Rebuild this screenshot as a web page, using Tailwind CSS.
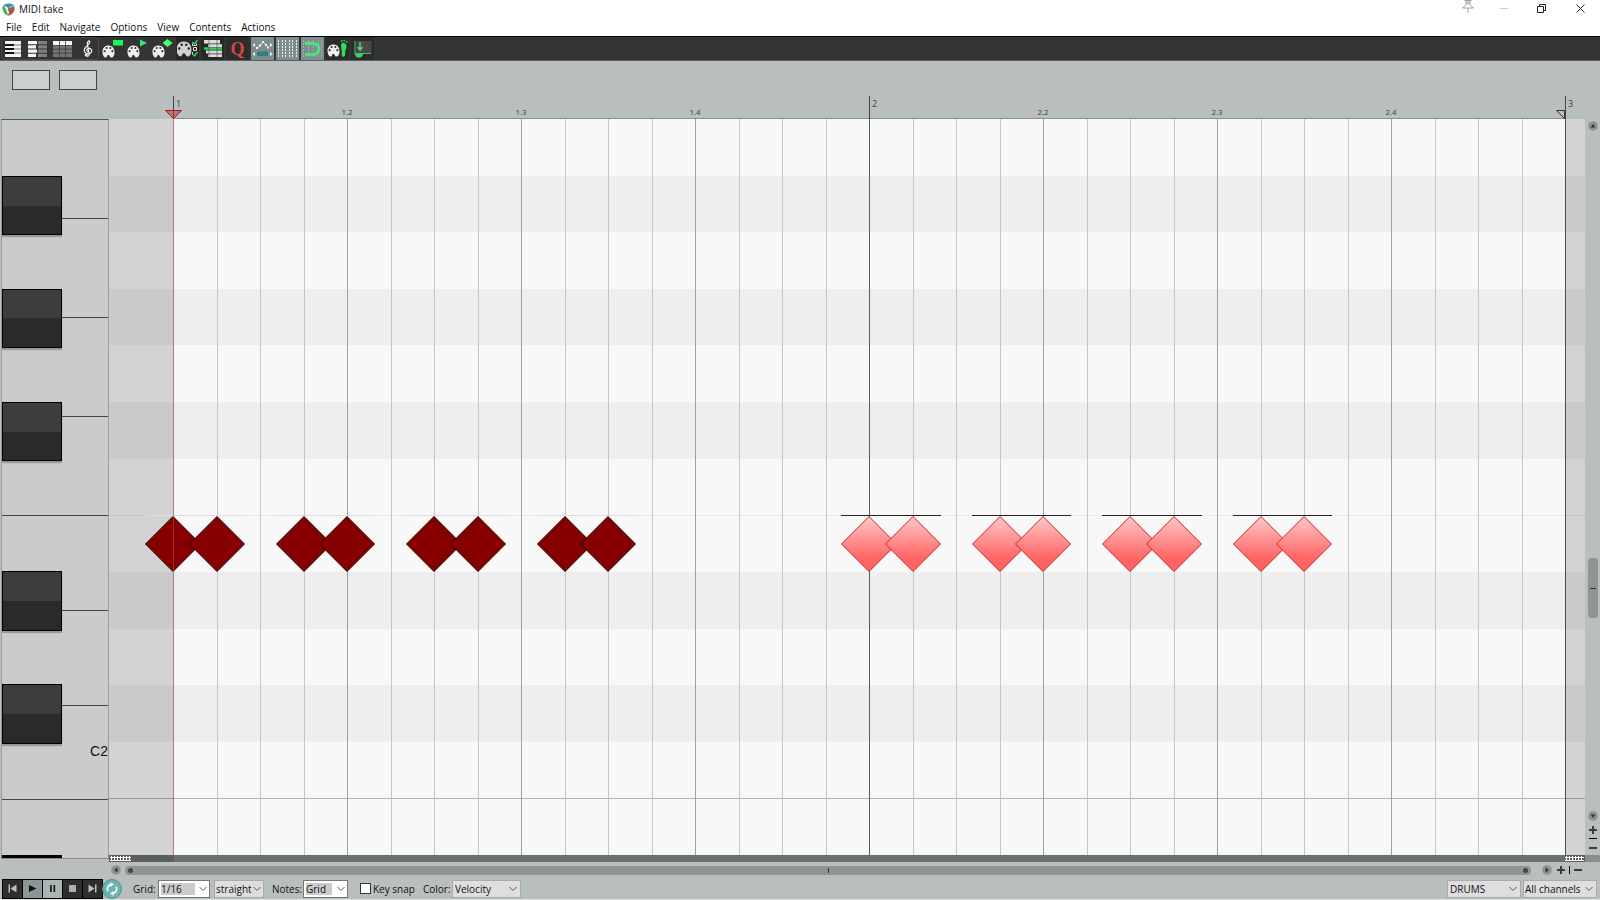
<!DOCTYPE html>
<html lang="en">
<head>
    <meta charset="UTF-8">
    <meta name="viewport" content="width=device-width, initial-scale=1.0">
    <title>MIDI take</title>
    <script src="https://cdn.jsdelivr.net/npm/@tailwindcss/browser@4"></script>
</head>
<body class="h-screen flex flex-col overflow-hidden bg-[#b8bfbe] text-[#111] text-[10px] leading-4 font-['Open_Sans','Noto_Sans',sans-serif]">
    <!-- Shared icon shapes -->
    <svg class="absolute size-0">
        <symbol id="palette" viewBox="0 0 14 14">
            <path fill-rule="evenodd" fill="#eee" d="M7 0.5C3 0.5 0.5 3.4 0.5 7c0 3.400 1.500 6.500 3.500 6.500 1.800 0 1-2.700 2.800-2.700 2 0 1.200 2.700 3.400 2.700 2 0 3.300-2.500 3.300-5.500C13.500 3.500 11 0.500 7 0.500zM5 2.200a1.100 1.100 0 1 1 0 2.200a1.100 1.100 0 0 1 0-2.200zM9 2.200a1.100 1.100 0 1 1 0 2.200a1.100 1.100 0 0 1 0-2.200zM2.800 5.500a1.100 1.100 0 1 1 0 2.200a1.100 1.100 0 0 1 0-2.200zM11.200 5.500a1.100 1.100 0 1 1 0 2.200a1.100 1.100 0 0 1 0-2.200z"/>
        </symbol>
        <symbol id="chevron" viewBox="0 0 8 8">
            <path d="M0.500 2L4 5.500L7.500 2" fill="none" stroke="#555" stroke-width="1"/>
        </symbol>
        <symbol id="diamond" viewBox="0 0 56 56">
            <path d="M28 0.500L55.500 28L28 55.500L0.500 28z"/>
        </symbol>
        <linearGradient id="pink" x1="0" y1="0" x2="0" y2="1">
            <stop offset="0" stop-color="#ffc8c8"/>
            <stop offset="0.750" stop-color="#ff6666"/>
            <stop offset="1" stop-color="#ff6060"/>
        </linearGradient>
    </svg>

    <!-- Title bar -->
    <header class="h-[18px] shrink-0 bg-white flex items-center pl-[2px] gap-1">
        <svg class="size-[13px]" viewBox="0 0 13 13">
            <path d="M0.500 4.500C1 2 3.500 0.500 6.500 0.500c3.500 0 6 1.500 6 4L9.500 3.200 6.500 5.200 3 3z" fill="#2a9bb8"/>
            <path d="M0.400 4C0.200 8 2.500 11.800 6.300 12.700L6.200 8.500 2.500 3.500z" fill="#43b649"/>
            <path d="M12.700 4.200c0.200 4-2.300 7.500-6.400 8.600L5.500 5.800 9.500 4z" fill="#b0524a"/>
            <path d="M2.800 3.600L5.500 5L7.200 10L6 11.500z" fill="#e9efef"/>
        </svg>
        <h1>MIDI take</h1>
        <div class="ml-auto flex items-start h-full">
            <button aria-label="Pin" class="w-[36px] flex justify-center">
                <svg class="w-3 h-[13px]" viewBox="0 0 12 13" fill="none" stroke="#888" stroke-width="0.800">
                    <path d="M2.500 0.500h7M4 1v3.500L0.700 8h10.600L8 4.500V1M5.200 1.500v3M6.800 1.500v3M6 8v5"/>
                </svg>
            </button>
            <button aria-label="Minimize" class="w-[36px] h-4 flex justify-center items-center">
                <span class="w-2 h-px bg-[#ccc]"></span>
            </button>
            <button aria-label="Restore" class="w-[38px] h-4 flex justify-center items-center">
                <svg class="size-[9px]" viewBox="0 0 9 9" fill="none" stroke="#222"><path d="M0.500 2.500h6v6h-6zM2.500 2.500v-2h6v6h-2"/></svg>
            </button>
            <button aria-label="Close" class="w-[40px] h-4 flex justify-center items-center">
                <svg class="size-[9px]" viewBox="0 0 9 9" fill="none" stroke="#222"><path d="M0.500 0.500l8 8M8.500 0.500l-8 8"/></svg>
            </button>
        </div>
    </header>

    <!-- Menu -->
    <nav class="h-[18px] shrink-0 bg-white flex items-center gap-[10px] pl-[6px]">
        <button>File</button>
        <button>Edit</button>
        <button>Navigate</button>
        <button>Options</button>
        <button>View</button>
        <button>Contents</button>
        <button>Actions</button>
    </nav>

    <!-- Toolbar -->
    <div class="h-[25px] shrink-0 bg-[#343434] border-t border-black border-b border-b-[#5c5f5f] flex items-stretch pl-px gap-[2px]">
        <div class="flex gap-[2px] rounded-[4px] outline -outline-offset-1 outline-[#4a4a4a]">
            <button aria-label="Piano roll" class="w-[23px] flex items-center justify-center">
                <svg class="w-4 h-4" viewBox="0 0 16 16"><path d="M0 0h16v16H0z" fill="#f4f4f4"/><path d="M0 3h9v2H0zM0 7h9v2H0zM0 11h9v2H0z" fill="#111"/><path d="M9 4h7M9 8h7M9 12h7" stroke="#555" stroke-width=".8"/></svg>
            </button>
            <button aria-label="Named notes" class="w-[23px] flex items-center justify-center">
                <svg class="w-[19px] h-4" viewBox="0 0 19 16"><path d="M0 0h9v3.200H0zM0 4.200h8v3.200H0zM0 8.500h9v3.200H0zM0 12.800h8V16H0z" fill="#f4f4f4"/><path d="M10 0h9v3.200h-9zM10 4.200h9v3.200h-9zM10 8.500h9v3.200h-9zM10 12.800h9V16h-9z" fill="#808080"/></svg>
            </button>
            <button aria-label="Event list" class="w-[23px] flex items-center justify-center">
                <svg class="w-[19px] h-4" viewBox="0 0 19 16"><path d="M0 0h6v4H0zM6.700 0h5.600v4H6.700zM13 0h6v4h-6z" fill="#f4f4f4"/><path d="M0 4.600h6v3.200H0zM6.700 4.600h5.600v3.200H6.700zM13 4.600h6v3.200h-6zM0 8.500h6v3.200H0zM6.700 8.500h5.600v3.200H6.700zM13 8.500h6v3.200h-6zM0 12.500h6V16H0zM6.700 12.500h5.600V16H6.700zM13 12.500h6V16h-6z" fill="#747474"/></svg>
            </button>
            <button aria-label="Notation" class="w-[23px] flex items-center justify-center">
                <svg class="w-[10px] h-[17px]" viewBox="0 0 10 17" fill="none" stroke="#eee" stroke-width="1.200"><path d="M5.800 11.500C3.500 11.800 3.200 9.200 5 8.600c2.500-0.700 4.300 1.400 3.500 3.300-1 2.200-5 2.400-6.600 0.300C0 9.500 2.200 7.400 4.200 5.800 6.300 4 7.200 2.600 6.500 1 5.500 0.500 4.200 2.200 4.400 4l1.800 10c0.200 2-1.500 2.800-2.900 1.800"/><circle cx="3.200" cy="14.800" r="1" fill="#eee"/></svg>
            </button>
        </div>
        <button aria-label="Rectangle notes" class="w-[23px] flex items-center justify-center">
            <svg class="w-[21px] h-5" viewBox="0 0 21 20"><use href="#palette" x="0" y="6" width="13" height="13"/><path d="M11 1h10v5.500H11z" fill="#19f556"/></svg>
        </button>
        <button aria-label="Triangle notes" class="w-[23px] flex items-center justify-center">
            <svg class="w-[21px] h-5" viewBox="0 0 21 20"><use href="#palette" x="0" y="6" width="13" height="13"/><path d="M13 0.500L20 4L13 7.500z" fill="#35e866"/></svg>
        </button>
        <button aria-label="Diamond notes" class="w-[23px] flex items-center justify-center">
            <svg class="w-[21px] h-5" viewBox="0 0 21 20"><use href="#palette" x="0" y="6" width="13" height="13"/><path d="M15.500 0L20.500 4L15.500 8L10.500 4z" fill="#45ff70"/></svg>
        </button>
        <button aria-label="Note options" class="w-[23px] flex items-center justify-center bg-[#282828]">
            <svg class="w-[21px] h-[18px]" viewBox="0 0 21 18"><use href="#palette" x="-1" y="1" width="16" height="16" opacity=".85"/><path d="M15.500 2l2 2 3-4M15.500 14l2 2 3-4" fill="none" stroke="#2ee05a" stroke-width="1.300"/><path d="M16.500 7.500h3v3h-3zM15.500 3.500v2h4v-2M15.500 12v2" fill="none" stroke="#ddd"/></svg>
        </button>
        <button aria-label="Media item lane" class="w-[23px] flex items-center justify-center bg-[#282828]">
            <svg class="w-[18px] h-[17px]" viewBox="0 0 18 17"><path d="M0 0h16v3.500H0zM4 4.200h14V7H4zM2 10.500h16v3H2zM4 14.200h14V17H4z" fill="#ddd"/><path d="M0 7.300h18v2.500H0z" fill="#2fd158"/><path d="M5 0v17M13 0v17" stroke="#444" stroke-width=".6"/></svg>
        </button>
        <button aria-label="Quantize" class="w-[23px] flex items-center justify-center bg-[#2c2c2c] text-[#d84848] text-[18px] font-bold font-['Liberation_Serif',serif]">Q</button>
        <button aria-label="CC envelope" class="w-[23px] flex items-center justify-center bg-[#7e8e90]">
            <svg class="w-[21px] h-[18px]" viewBox="0 0 21 18"><path d="M5 8L8 6L11 2L14 5L16 7" fill="none" stroke="#e8eeee"/><path d="M4 7h2v2H4zM7 4.500h2v2H7zM10 1h2v2h-2zM13 4h2v2h-2zM15 6.500h2v2h-2zM3 3L0.500 5L3 7zM18 3l2.500 2L18 7zM3 12l-2.500 2L3 16zM18 12l2.500 2-2.500 2z" fill="#f4f6f6"/><path d="M5 11.500h11v4.500H5z" fill="#2f7f80"/></svg>
        </button>
        <button aria-label="Show grid" class="w-[23px] flex items-center justify-center bg-[#7e8e90]">
            <svg class="w-[19px] h-[18px]" viewBox="0 0 19 18"><path d="M0.500 0v18M4.500 0v18M7.500 0v18M11.500 0v18M14.500 0v18M18.500 0v18" stroke="#e8eeee" stroke-dasharray="2 1"/></svg>
        </button>
        <button aria-label="Snap to grid" class="w-[23px] flex items-center justify-center bg-[#7e8e90]">
            <svg class="w-[19px] h-[18px]" viewBox="0 0 19 18"><path d="M0.500 0v18M5.500 0v18M10.500 0v18M15.500 0v18M18.500 0v18" stroke="#9fadad" stroke-dasharray="2 1"/><path d="M2 3.500h8.500a5 5 0 0 1 0 11H2" fill="none" stroke="#4be37c" stroke-width="3"/></svg>
        </button>
        <button aria-label="Step input" class="w-[23px] flex items-center justify-center bg-[#2c2c2c]">
            <svg class="w-[21px] h-[18px]" viewBox="0 0 21 18"><use href="#palette" x="0" y="4" width="13" height="13"/><path d="M14.500 3.500c1-1.500 4.500-1 5 2 0.400 3-1.200 4-1.400 6.500-0.100 2 0.400 4.500-1.600 4.800-2 0-2-2-1.700-4.300 0.400-3-1.600-6-0.300-9z" fill="#2fe058"/><path d="M14 1h1.500M16.500 0.500h1.500M19 1.800h1.500" stroke="#2fe058" stroke-width="1.500"/></svg>
        </button>
        <button aria-label="Dock editor" class="w-[23px] flex items-center justify-center bg-[#2c2c2c]">
            <svg class="w-[18px] h-[18px]" viewBox="0 0 18 18"><path d="M2.500 1h15v12h-15z" fill="#484848"/><path d="M1 1v12.500h16" fill="none" stroke="#49b868" stroke-width="1.200"/><path d="M6 2v8M3.500 7L6 10L8.500 7" fill="none" stroke="#54d67a" stroke-width="1.500"/><path d="M1 14h8c0 5-8 5-8 0z" fill="#35d561"/></svg>
        </button>
    </div>

    <!-- Track boxes + ruler -->
    <div class="h-[58px] shrink-0 flex">
        <div class="w-[109px] shrink-0 flex items-start gap-[9px] pl-3 pt-[9px]">
            <div class="w-[38px] h-5 border border-[#444] bg-[#cdcfce]"></div>
            <div class="w-[38px] h-5 border border-[#444] bg-[#cdcfce]"></div>
        </div>
        <div class="w-16 shrink-0"></div>
        <div id="ruler" class="relative flex-1 border-b border-[#8a8f8e] text-[#3c4242] text-[8px] leading-3"></div>
        <div class="w-[35px] shrink-0"></div>
    </div>

    <!-- Editor -->
    <main class="flex-1 min-h-0 flex">
        <!-- Piano keys -->
        <div class="relative ml-px w-[108px] shrink-0 border-t border-t-[#555] border-x border-x-[#999d9d] bg-[#cbcbcb]">
            <div id="white-keys" class="h-full flex flex-col"></div>
            <div id="black-keys" class="absolute inset-0 grid grid-rows-[repeat(13,minmax(0,1fr))] text-right text-[14px] leading-[18px] font-['Liberation_Sans',sans-serif]"></div>
        </div>

        <!-- Piano roll -->
        <div class="relative flex-1 flex">
            <div id="lanes" class="absolute inset-0 grid grid-rows-[repeat(13,minmax(0,1fr))]"></div>
            <div class="relative w-16 shrink-0 bg-black/15"></div>
            <div id="roll" class="relative flex-1"></div>
            <div class="relative w-5 shrink-0 bg-black/15"></div>
        </div>

        <!-- Vertical scroll -->
        <div class="w-[15px] shrink-0 flex flex-col items-center">
            <button aria-label="Scroll up" class="mt-[2px]">
                <svg class="size-[10px]" viewBox="0 0 10 10"><circle cx="5" cy="5" r="4.800" fill="#8d9392"/><path d="M5 3L7.500 6.500h-5z" fill="#333"/></svg>
            </button>
            <div class="flex-1 w-full flex flex-col items-center">
                <div class="basis-0 grow-427"></div>
                <div class="w-[10px] h-[60px] rounded-[4px] bg-[#8f9594] flex items-center justify-center"><span class="w-[6px] h-px bg-[#333]"></span></div>
                <div class="basis-0 grow-193"></div>
            </div>
            <button aria-label="Scroll down">
                <svg class="size-[10px]" viewBox="0 0 10 10"><circle cx="5" cy="5" r="4.800" fill="#8d9392"/><path d="M5 7L7.500 3.500h-5z" fill="#333"/></svg>
            </button>
            <button aria-label="Zoom in vertically" class="mt-[5px]">
                <svg class="size-2" viewBox="0 0 8 8"><path d="M4 0v8M0 4h8" stroke="#3a3d3d" stroke-width="2"/></svg>
            </button>
            <span class="mt-1 w-2 h-px bg-black"></span>
            <button aria-label="Zoom out vertically" class="mt-2 mb-[6px] w-2 h-[2px] bg-[#3a3d3d]"></button>
        </div>
    </main>

    <!-- CC lane divider -->
    <div class="h-[7px] shrink-0 flex">
        <div class="ml-px w-[108px] h-1 shrink-0 flex border-x border-b border-[#888c8c] bg-[#cbcbcb]">
            <div class="w-[60px] bg-black"></div>
        </div>
        <div class="w-16 shrink-0 bg-[#5a5e5e] p-px">
            <div class="w-[21px] h-[5px] bg-[radial-gradient(#fff_50%,transparent_60%)] bg-size-[3px_3px]"></div>
        </div>
        <div class="flex-1 bg-[#6b6f6f] border-l border-[#9c4444]"></div>
        <div class="w-5 shrink-0 bg-[#5a5e5e] py-px">
            <div class="w-[19px] h-[5px] bg-[radial-gradient(#fff_50%,transparent_60%)] bg-size-[3px_3px]"></div>
        </div>
        <div class="w-[15px] shrink-0 bg-[#8a8f8f]"></div>
    </div>

    <!-- Horizontal scroll -->
    <div class="h-4 shrink-0 flex items-center pl-[111px] pr-[18px]">
        <button aria-label="Scroll left">
            <svg class="size-[10px]" viewBox="0 0 10 10"><circle cx="5" cy="5" r="4.800" fill="#8d9392"/><path d="M3 5L6.500 2.500v5z" fill="#333"/></svg>
        </button>
        <div class="flex-1 ml-1 h-[9px] rounded-[4px] bg-[#8f9594] flex items-center justify-between px-[3px]">
            <span class="size-[5px] rounded-full bg-[#444]"></span>
            <span class="w-px h-[5px] bg-[#333]"></span>
            <span class="size-[5px] rounded-full bg-[#444]"></span>
        </div>
        <button aria-label="Scroll right" class="ml-[11px]">
            <svg class="size-[10px]" viewBox="0 0 10 10"><circle cx="5" cy="5" r="4.800" fill="#8d9392"/><path d="M7 5L3.500 2.500v5z" fill="#333"/></svg>
        </button>
        <button aria-label="Zoom in" class="ml-[5px]">
            <svg class="size-2" viewBox="0 0 8 8"><path d="M4 0v8M0 4h8" stroke="#3a3d3d" stroke-width="2"/></svg>
        </button>
        <span class="ml-1 w-px h-2 bg-black"></span>
        <button aria-label="Zoom out" class="ml-1 w-2 h-[2px] bg-[#3a3d3d]"></button>
    </div>

    <!-- Transport and settings -->
    <footer class="h-[22px] shrink-0 flex items-center pl-[2px] pr-[3px] border-b border-[#dfe3e2]">
        <div class="flex h-5 bg-black gap-px p-px">
            <button aria-label="Go to start" class="w-[19px] flex items-center justify-center bg-[#2e2e2e]"><svg class="size-[9px]" viewBox="0 0 9 9" fill="#b9c0c0"><path d="M0.500 0.500h1.500v8H0.500zM8.500 0.500v8L2.500 4.500z"/></svg></button>
            <button aria-label="Play" class="w-[19px] flex items-center justify-center bg-[#8b9797]"><svg class="size-[9px]" viewBox="0 0 9 9" fill="#111"><path d="M1 1v7l7.500-3.500z"/></svg></button>
            <button aria-label="Pause" class="w-[19px] flex items-center justify-center bg-[#abb5b4]"><svg class="size-[9px]" viewBox="0 0 9 9" fill="#222"><path d="M2 1h1.800v7H2zM5.400 1h1.800v7H5.400z"/></svg></button>
            <button aria-label="Stop" class="w-[19px] flex items-center justify-center bg-[#2e2e2e]"><span class="size-[7px] bg-[#a9b1b1]"></span></button>
            <button aria-label="Go to end" class="w-[19px] flex items-center justify-center bg-[#2e2e2e]"><svg class="size-[9px]" viewBox="0 0 9 9" fill="#b9c0c0"><path d="M7 0.500h1.500v8H7zM0.500 0.500v8l6-4z"/></svg></button>
        </div>
        <button aria-label="Repeat" class="-ml-px">
            <svg class="size-5" viewBox="0 0 20 20"><circle cx="10" cy="10" r="9.500" fill="#6db3b2" stroke="#568f8f"/><path d="M9 5.500A4.500 4.500 0 0 0 6 12.200M11 14.500A4.500 4.500 0 0 0 14 7.800" fill="none" stroke="#eefafa" stroke-width="1.800"/><path d="M8.500 3l3.500 2.500L8.500 8zM11.500 12v5L8 14.500z" fill="#eefafa"/></svg>
        </button>

        <label for="grid" class="ml-[11px] w-[25px]">Grid:</label>
        <div class="relative w-[52px] h-[18px] p-[2px] border border-[#777] bg-white flex">
            <select id="grid" class="appearance-none w-[34px] bg-[#cbcbcb] leading-3"><option>1/16</option></select>
            <svg class="absolute right-[2px] top-1 size-2 pointer-events-none"><use href="#chevron"/></svg>
        </div>
        <div class="relative ml-1 w-[50px] h-[18px] border border-[#aaa] bg-[#dedede] flex">
            <select aria-label="Grid type" class="appearance-none w-full pl-px"><option>straight</option></select>
            <svg class="absolute right-[2px] top-1 size-2 pointer-events-none"><use href="#chevron"/></svg>
        </div>
        <label for="notes" class="ml-2 w-[31px]">Notes:</label>
        <div class="relative w-[45px] h-[18px] p-[2px] border border-[#777] bg-white flex">
            <select id="notes" class="appearance-none w-[26px] bg-[#cbcbcb] leading-3"><option>Grid</option></select>
            <svg class="absolute right-[2px] top-1 size-2 pointer-events-none"><use href="#chevron"/></svg>
        </div>
        <input id="key-snap" type="checkbox" class="appearance-none ml-3 size-[11px] border border-[#333] bg-white">
        <label for="key-snap" class="ml-[2px] w-[50px] whitespace-nowrap">Key snap</label>
        <label for="color" class="w-[29px]">Color:</label>
        <div class="relative w-[69px] h-[18px] border border-[#aaa] bg-[#dedede] flex">
            <select id="color" class="appearance-none w-full pl-[2px]"><option>Velocity</option></select>
            <svg class="absolute right-[3px] top-1 size-2 pointer-events-none"><use href="#chevron"/></svg>
        </div>
        <div class="relative ml-auto w-[74px] h-[18px] border border-[#aaa] bg-[#dedede] flex">
            <select aria-label="Track" class="appearance-none w-full pl-[2px]"><option>DRUMS</option></select>
            <svg class="absolute right-[3px] top-1 size-2 pointer-events-none"><use href="#chevron"/></svg>
        </div>
        <div class="relative ml-[2px] w-[74px] h-[18px] border border-[#aaa] bg-[#dedede] flex">
            <select aria-label="Channel" class="appearance-none w-full pl-px"><option>All channels</option></select>
            <svg class="absolute right-[3px] top-1 size-2 pointer-events-none"><use href="#chevron"/></svg>
        </div>
    </footer>

    <script>
        const STEPS = 32; // two bars of sixteenths
        const blackRows = [1, 3, 5, 8, 10];
        const whiteKeys = [99, 99, 99, 99, 95, 95, 94, 56];
        const notes = [0, 1, 3, 4, 6, 7, 9, 10, 16, 17, 19, 20, 22, 23, 25, 26];
        const pos = step => `left:${step / STEPS * 100}%`;

        // Piano keys
        document.getElementById('white-keys').innerHTML = whiteKeys.map((size, i) =>
            `<div class="basis-0 ${i < 7 ? 'border-b border-[#444]' : ''}" style="flex-grow:${size}"></div>`
        ).join('');

        let keys = '';
        let lanes = '';
        for (let row = 0; row < 13; row++) {
            const black = blackRows.includes(row);
            keys += '<div class="relative">';
            if (black) keys += '<div class="absolute -top-px left-0 w-[60px] -bottom-[2px] border border-black bg-linear-to-b from-[#3d3d3d] from-50% to-[#2a2a2a] to-50% shadow-[0_2px_1px_#999]"></div>';
            if (row === 11) keys += 'C2';
            keys += '</div>';
            const edge = row === 12 ? 'border-t border-[#b4b4b4]' : row === 7 ? 'border-t border-[#e8e8e8]' : '';
            lanes += `<div class="${black ? 'bg-[#eeeeee]' : 'bg-[#f8f8f8]'} ${edge}"></div>`;
        }
        document.getElementById('black-keys').innerHTML = keys;
        document.getElementById('lanes').innerHTML = lanes;

        // Grid lines
        let roll = '';
        for (let i = 1; i <= STEPS; i++) {
            const color = i % 16 === 0 ? 'bg-[#5c5c5c]' : i % 4 === 0 ? 'bg-[#a0a0a0]' : 'bg-[#c6c6c6]';
            roll += `<div class="absolute inset-y-0 w-px ${color}" style="${pos(i)}"></div>`;
        }

        // Notes, one row below the upper C
        notes.forEach((step, i) => {
            const muted = step < 16;
            const paint = muted ? 'fill-[#860000] stroke-[#200000]' : 'fill-[url(#pink)] stroke-[#cc2020]';
            if (i % 2 === 0) {
                roll += `<div class="absolute top-[53.8%] -ml-7 h-px ${muted ? 'bg-[#dedede]' : 'bg-[#222]'}" style="${pos(step)};width:calc(${100 / STEPS}% + 56px)"></div>`;
            }
            roll += `<svg class="absolute top-[57.7%] -ml-7 -mt-7 size-14 ${paint}" style="${pos(step)}"><use href="#diamond"/></svg>`;
        });
        roll += '<div class="absolute inset-y-0 left-0 w-px bg-[#b43c3c]/70"></div>';
        document.getElementById('roll').innerHTML = roll;

        // Ruler
        let ruler = '';
        for (let beat = 0; beat <= 8; beat++) {
            const bar = Math.floor(beat / 4) + 1;
            if (beat % 4 === 0) {
                ruler += `<div class="absolute top-[35px] -bottom-px border-l border-[#444] pl-[2px] text-[9px] leading-[16px]" style="${pos(beat * 4)}">${bar}</div>`;
            } else {
                ruler += `<div class="absolute bottom-0 -translate-x-1/2" style="${pos(beat * 4)}">${bar}.${beat % 4 + 1}</div>`;
            }
        }
        ruler += '<svg class="absolute left-0 -ml-2 -bottom-px w-[17px] h-[9px]" viewBox="0 0 17 9"><path d="M0.500 0.500h16L8.500 8.500z" fill="#b03030" fill-opacity=".5" stroke="#a81818"/></svg>';
        ruler += '<svg class="absolute right-0 -bottom-px w-[9px] h-[9px]" viewBox="0 0 9 9"><path d="M0.500 0.500h8v8z" fill="none" stroke="#333"/></svg>';
        document.getElementById('ruler').innerHTML = ruler;
    </script>
</body>
</html>
